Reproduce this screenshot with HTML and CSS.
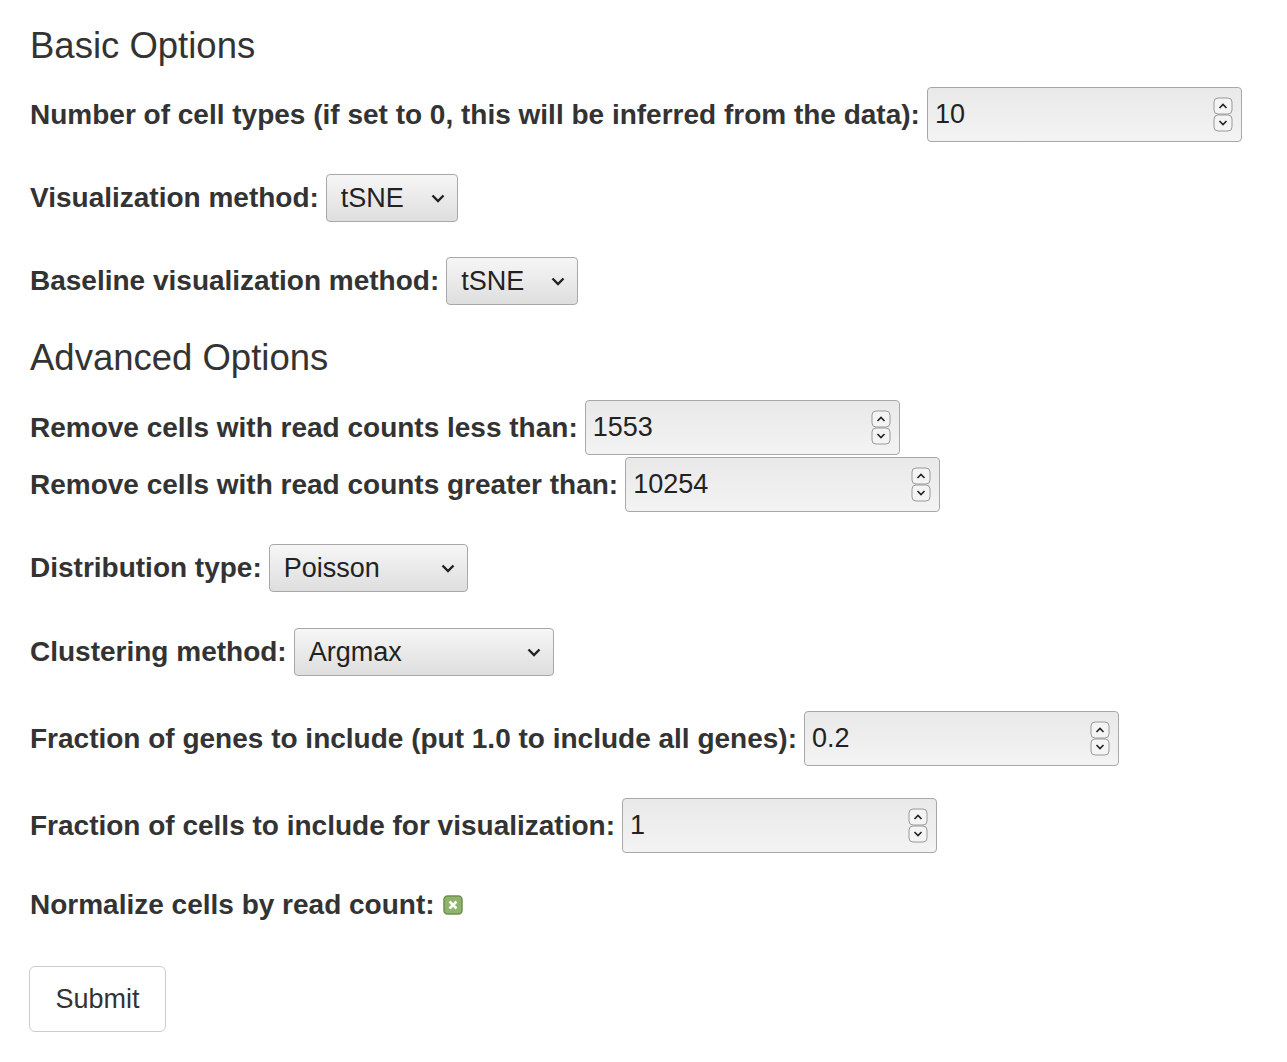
FILE: index.html
```html
<!DOCTYPE html>
<html>
<head>
<meta charset="utf-8">
<title>Options</title>
<link rel="stylesheet" href="styles.css">
</head>
<body>
<form class="page">
  <h3 class="heading h-basic">Basic Options</h3>

  <div class="row r1">
    <label class="lbl">Number of cell types (if set to 0, this will be inferred from the data):</label>
    <div class="num"><input type="number" value="10"><svg class="spin" width="20" height="36" viewBox="0 0 20 36"><rect x="1" y="1" width="18" height="16" rx="4" fill="#f4f4f4" stroke="#9a9a9a"/><rect x="1" y="18" width="18" height="16" rx="4" fill="#f4f4f4" stroke="#9a9a9a"/><path d="M6.5 11 L10 7.5 L13.5 11" fill="none" stroke="#222" stroke-width="1.6"/><path d="M6.5 24 L10 27.5 L13.5 24" fill="none" stroke="#222" stroke-width="1.6"/></svg></div>
  </div>

  <div class="row r2">
    <label class="lbl">Visualization method:</label>
    <div class="sel w-tsne"><select><option>tSNE</option></select><svg class="chev" width="14" height="10" viewBox="0 0 14 10"><path d="M1.5 2.5 L7 8 L12.5 2.5" fill="none" stroke="#222" stroke-width="2.4"/></svg></div>
  </div>

  <div class="row r3">
    <label class="lbl">Baseline visualization method:</label>
    <div class="sel w-tsne"><select><option>tSNE</option></select><svg class="chev" width="14" height="10" viewBox="0 0 14 10"><path d="M1.5 2.5 L7 8 L12.5 2.5" fill="none" stroke="#222" stroke-width="2.4"/></svg></div>
  </div>

  <h3 class="heading h-adv">Advanced Options</h3>

  <div class="row r4">
    <label class="lbl">Remove cells with read counts less than:</label>
    <div class="num"><input type="number" value="1553"><svg class="spin" width="20" height="36" viewBox="0 0 20 36"><rect x="1" y="1" width="18" height="16" rx="4" fill="#f4f4f4" stroke="#9a9a9a"/><rect x="1" y="18" width="18" height="16" rx="4" fill="#f4f4f4" stroke="#9a9a9a"/><path d="M6.5 11 L10 7.5 L13.5 11" fill="none" stroke="#222" stroke-width="1.6"/><path d="M6.5 24 L10 27.5 L13.5 24" fill="none" stroke="#222" stroke-width="1.6"/></svg></div>
  </div>

  <div class="row r5">
    <label class="lbl">Remove cells with read counts greater than:</label>
    <div class="num"><input type="number" value="10254"><svg class="spin" width="20" height="36" viewBox="0 0 20 36"><rect x="1" y="1" width="18" height="16" rx="4" fill="#f4f4f4" stroke="#9a9a9a"/><rect x="1" y="18" width="18" height="16" rx="4" fill="#f4f4f4" stroke="#9a9a9a"/><path d="M6.5 11 L10 7.5 L13.5 11" fill="none" stroke="#222" stroke-width="1.6"/><path d="M6.5 24 L10 27.5 L13.5 24" fill="none" stroke="#222" stroke-width="1.6"/></svg></div>
  </div>

  <div class="row r6">
    <label class="lbl">Distribution type:</label>
    <div class="sel w-pois"><select><option>Poisson</option></select><svg class="chev" width="14" height="10" viewBox="0 0 14 10"><path d="M1.5 2.5 L7 8 L12.5 2.5" fill="none" stroke="#222" stroke-width="2.4"/></svg></div>
  </div>

  <div class="row r7">
    <label class="lbl">Clustering method:</label>
    <div class="sel w-argmax"><select><option>Argmax</option></select><svg class="chev" width="14" height="10" viewBox="0 0 14 10"><path d="M1.5 2.5 L7 8 L12.5 2.5" fill="none" stroke="#222" stroke-width="2.4"/></svg></div>
  </div>

  <div class="row r8">
    <label class="lbl">Fraction of genes to include (put 1.0 to include all genes):</label>
    <div class="num"><input type="number" value="0.2"><svg class="spin" width="20" height="36" viewBox="0 0 20 36"><rect x="1" y="1" width="18" height="16" rx="4" fill="#f4f4f4" stroke="#9a9a9a"/><rect x="1" y="18" width="18" height="16" rx="4" fill="#f4f4f4" stroke="#9a9a9a"/><path d="M6.5 11 L10 7.5 L13.5 11" fill="none" stroke="#222" stroke-width="1.6"/><path d="M6.5 24 L10 27.5 L13.5 24" fill="none" stroke="#222" stroke-width="1.6"/></svg></div>
  </div>

  <div class="row r9">
    <label class="lbl">Fraction of cells to include for visualization:</label>
    <div class="num"><input type="number" value="1"><svg class="spin" width="20" height="36" viewBox="0 0 20 36"><rect x="1" y="1" width="18" height="16" rx="4" fill="#f4f4f4" stroke="#9a9a9a"/><rect x="1" y="18" width="18" height="16" rx="4" fill="#f4f4f4" stroke="#9a9a9a"/><path d="M6.5 11 L10 7.5 L13.5 11" fill="none" stroke="#222" stroke-width="1.6"/><path d="M6.5 24 L10 27.5 L13.5 24" fill="none" stroke="#222" stroke-width="1.6"/></svg></div>
  </div>

  <div class="row r10">
    <label class="lbl">Normalize cells by read count:</label>
    <svg class="check" width="20" height="20" viewBox="0 0 20 20"><rect x="1" y="1" width="18" height="18" rx="3.5" fill="#8db46a" stroke="#6f8f52" stroke-width="1.5"/><path d="M6.5 6.5 L13.5 13.5 M13.5 6.5 L6.5 13.5" stroke="#ffffff" stroke-width="2.6"/></svg>
  </div>

  <div class="submit-row">
    <button type="button" class="btn">Submit</button>
  </div>
</form>
</body>
</html>
```

FILE: styles.css
```css
html, body {
  margin: 0;
  padding: 0;
  background: #ffffff;
}
body {
  font-family: "Liberation Sans", Arial, Helvetica, sans-serif;
  color: #333333;
}
.page {
  display: flex;
  flex-direction: column;
  align-items: flex-start;
  padding: 26px 0 0 30px;
}
.heading {
  margin: 0;
  font-size: 36.5px;
  font-weight: 400;
  line-height: 40px;
  height: 40px;
  color: #333333;
}
.h-adv { margin-top: 33px; }
.row {
  display: flex;
  align-items: center;
  gap: 7px;
}
.lbl {
  font-size: 28px;
  font-weight: 700;
  line-height: 32px;
  white-space: nowrap;
}
.r1 { margin-top: 21px; }
.r2 { margin-top: 32px; }
.r3 { margin-top: 35px; }
.r4 { margin-top: 22px; }
.r5 { margin-top: 2px; }
.r6 { margin-top: 32px; }
.r7 { margin-top: 36px; }
.r8 { margin-top: 35px; }
.r9 { margin-top: 32px; }
.r10 { margin-top: 37px; height: 30px; gap: 8px; }

.num {
  box-sizing: border-box;
  width: 315px;
  height: 55px;
  border: 1px solid #a8a8a8;
  border-radius: 4px;
  background: linear-gradient(#e9e9e9, #f3f3f3);
  display: flex;
  align-items: center;
  padding: 0 8px 0 7px;
}
.num input {
  flex: 1;
  min-width: 0;
  border: none;
  outline: none;
  background: transparent;
  font-family: "Liberation Sans", Arial, sans-serif;
  font-size: 27px;
  color: #222222;
  padding: 0;
  -moz-appearance: textfield;
}
.num input::-webkit-inner-spin-button,
.num input::-webkit-outer-spin-button {
  -webkit-appearance: none;
  margin: 0;
}
.spin { flex: none; }

.sel {
  box-sizing: border-box;
  height: 48px;
  border: 1px solid #a8a8a8;
  border-radius: 4px;
  background: linear-gradient(#f6f6f6, #dedede);
  display: flex;
  align-items: center;
  padding: 0 12px 0 14px;
}
.sel select {
  flex: 1;
  min-width: 0;
  -webkit-appearance: none;
  appearance: none;
  border: none;
  outline: none;
  background: transparent;
  font-family: "Liberation Sans", Arial, sans-serif;
  font-size: 27px;
  color: #222222;
  padding: 0;
  margin: 0;
}
.chev { flex: none; }
.w-tsne { width: 132px; }
.w-pois { width: 199px; }
.w-argmax { width: 260px; }

.check { flex: none; }

.submit-row { margin-top: 46px; }
.btn {
  box-sizing: border-box;
  width: 137px;
  height: 66px;
  margin-left: -1px;
  background: #ffffff;
  border: 1px solid #cccccc;
  border-radius: 6px;
  font-family: "Liberation Sans", Arial, sans-serif;
  font-size: 27px;
  color: #333333;
  padding: 0;
}
```
